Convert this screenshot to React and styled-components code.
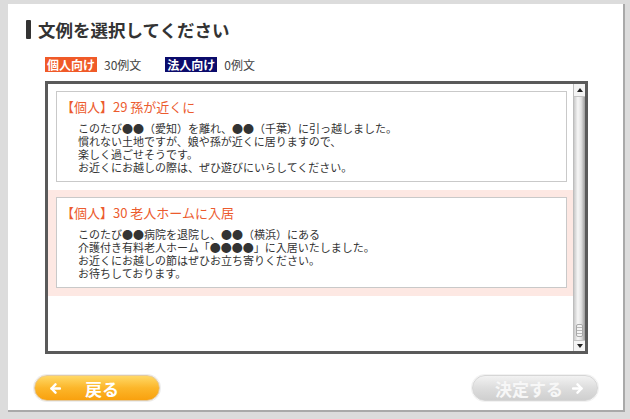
import React from "react";
import styled, { createGlobalStyle } from "styled-components";

const GlobalStyle = createGlobalStyle`
    html, body {
        margin: 0;
        padding: 0;
        background: #dcdcdc;
        font-family: "Noto Sans CJK JP", "Noto Sans", sans-serif;
    }
    * {
        box-sizing: border-box;
    }
`

const Panel = styled.div`
    width: 617px;
    height: 408px;
    margin: 4px 0 0 8px;
    padding: 16px 0 0 18px;
    background: #fff;
    border-right: 2px solid #a9a9a9;
    border-bottom: 2px solid #a9a9a9;
    display: flex;
    flex-direction: column;
`

const Heading = styled.div`
    display: flex;
    align-items: center;
    gap: 7px;
    height: 19px;
`

const HeadingBar = styled.span`
    width: 5px;
    height: 19px;
    background: #333;
    border-radius: 1px;
`

const HeadingText = styled.h1`
    margin: 0;
    font-size: 17.5px;
    font-weight: bold;
    line-height: 19px;
    color: #333;
`

const TagRow = styled.div`
    display: flex;
    align-items: center;
    margin: 18px 0 0 19px;
    height: 15px;
`

const Tag = styled.span`
    height: 15px;
    padding: 0 2px;
    background: ${p => p.$color};
    color: #fff;
    font-size: 12px;
    font-weight: bold;
    line-height: 15px;
`

const Count = styled.span`
    margin: 0 24px 0 7px;
    font-size: 12px;
    color: #444;
`

const ListBox = styled.div`
    width: 543px;
    height: 273px;
    margin: 9px 0 0 19px;
    border: 3px solid #5a5a5a;
    display: flex;
`

const List = styled.div`
    flex: 1;
    overflow: hidden;
`

const Item = styled.div`
    padding: 7px 6px 8px 8px;
    background: ${p => (p.$selected ? "#fde8e3" : "#fff")};
`

const Card = styled.div`
    height: 91px;
    padding: 7px 6px 0 4px;
    background: #fff;
    border: 1px solid #c9c9c9;
`

const CardTitle = styled.div`
    font-size: 13px;
    line-height: 16px;
    color: #ec5b2e;
`

const CardBody = styled.p`
    margin: 7px 0 0 17px;
    font-size: 11px;
    line-height: 13px;
    color: #333;
    white-space: pre-line;
`

const Scrollbar = styled.div`
    width: 12px;
    display: flex;
    flex-direction: column;
    border-left: 1px solid #bdbdbd;
`

const ScrollArrow = styled.div`
    height: ${p => p.$h}px;
    background: #f4f4f4;
    border-bottom: ${p => (p.$up ? "1px solid #c4c4c4" : "none")};
    border-top: ${p => (p.$up ? "none" : "1px solid #c4c4c4")};
    display: flex;
    align-items: center;
    justify-content: center;
`

const Track = styled.div`
    flex: 1;
    background: linear-gradient(to right, #c9c9c9, #f6f6f6 35%, #e2e2e2 65%, #9c9c9c);
    display: flex;
    flex-direction: column;
    justify-content: flex-end;
    align-items: center;
    padding-bottom: 3px;
`

const Grip = styled.div`
    width: 7px;
    height: 13px;
    border: 1px solid #a8a8a8;
    border-radius: 2px;
    background: repeating-linear-gradient(#f4f4f4 0 2px, #b8b8b8 2px 3px);
`

const ButtonRow = styled.div`
    display: flex;
    justify-content: space-between;
    margin: 21px 25px 0 8px;
`

const PillButton = styled.button`
    width: 126px;
    height: 26px;
    padding: 0 0 0 ${p => p.$pad}px;
    border-radius: 13px;
    border: 1px solid ${p => (p.$primary ? "#e3c9a0" : "#d6d6d6")};
    box-shadow: 0 0 0 1px ${p => (p.$primary ? "#eeeeee" : "#f2f2f2")};
    background: ${p => (p.$primary
        ? "linear-gradient(#ffd866, #fcb62a 50%, #f9a10e)"
        : "linear-gradient(#f2f2f2, #dddddd 50%, #cfcfcf)")};
    color: ${p => (p.$primary ? "#fff" : "#f7f7f7")};
    font-family: "Noto Sans CJK JP", "Noto Sans", sans-serif;
    font-size: 17px;
    font-weight: bold;
    display: flex;
    align-items: center;
    gap: ${p => p.$gap}px;
    cursor: pointer;
`

const ArrowIcon = ({left}) => (
    <svg width="11" height="11" viewBox="0 0 11 11">
        <g fill="none" stroke="#fff" strokeWidth="2.4" strokeLinecap="round" strokeLinejoin="round"
           transform={left ? "" : "rotate(180 5.5 5.5)"}>
            <path d="M1.5 5.5 H10"/>
            <path d="M5.5 1.3 L1.5 5.5 L5.5 9.7"/>
        </g>
    </svg>
)

const items = [
    {
        title: "【個人】29 孫が近くに",
        body: "このたび●●（愛知）を離れ、●●（千葉）に引っ越しました。\n慣れない土地ですが、娘や孫が近くに居りますので、\n楽しく過ごせそうです。\nお近くにお越しの際は、ぜひ遊びにいらしてください。",
    },
    {
        title: "【個人】30 老人ホームに入居",
        body: "このたび●●病院を退院し、●●（横浜）にある\n介護付き有料老人ホーム「●●●●」に入居いたしました。\nお近くにお越しの節はぜひお立ち寄りください。\nお待ちしております。",
        selected: true,
    },
]

const App = () => {
    return (
        <>
            <GlobalStyle/>
            <Panel>
                <Heading>
                    <HeadingBar/>
                    <HeadingText>文例を選択してください</HeadingText>
                </Heading>
                <TagRow>
                    <Tag $color="#f05a28">個人向け</Tag>
                    <Count>30例文</Count>
                    <Tag $color="#0b0b6b">法人向け</Tag>
                    <Count>0例文</Count>
                </TagRow>
                <ListBox>
                    <List>
                        {items.map(item => (
                            <Item key={item.title} $selected={item.selected}>
                                <Card>
                                    <CardTitle>{item.title}</CardTitle>
                                    <CardBody>{item.body}</CardBody>
                                </Card>
                            </Item>
                        ))}
                    </List>
                    <Scrollbar>
                        <ScrollArrow $up $h={13}>
                            <svg width="6" height="4" viewBox="0 0 6 4"><path d="M0 4 L3 0 L6 4 Z" fill="#222"/></svg>
                        </ScrollArrow>
                        <Track>
                            <Grip/>
                        </Track>
                        <ScrollArrow $h={11}>
                            <svg width="6" height="4" viewBox="0 0 6 4"><path d="M0 0 L3 4 L6 0 Z" fill="#222"/></svg>
                        </ScrollArrow>
                    </Scrollbar>
                </ListBox>
                <ButtonRow>
                    <PillButton $primary $pad={15} $gap={24}>
                        <ArrowIcon left/>
                        戻る
                    </PillButton>
                    <PillButton $pad={22} $gap={9}>
                        決定する
                        <ArrowIcon/>
                    </PillButton>
                </ButtonRow>
            </Panel>
        </>
    );
}

export default App
